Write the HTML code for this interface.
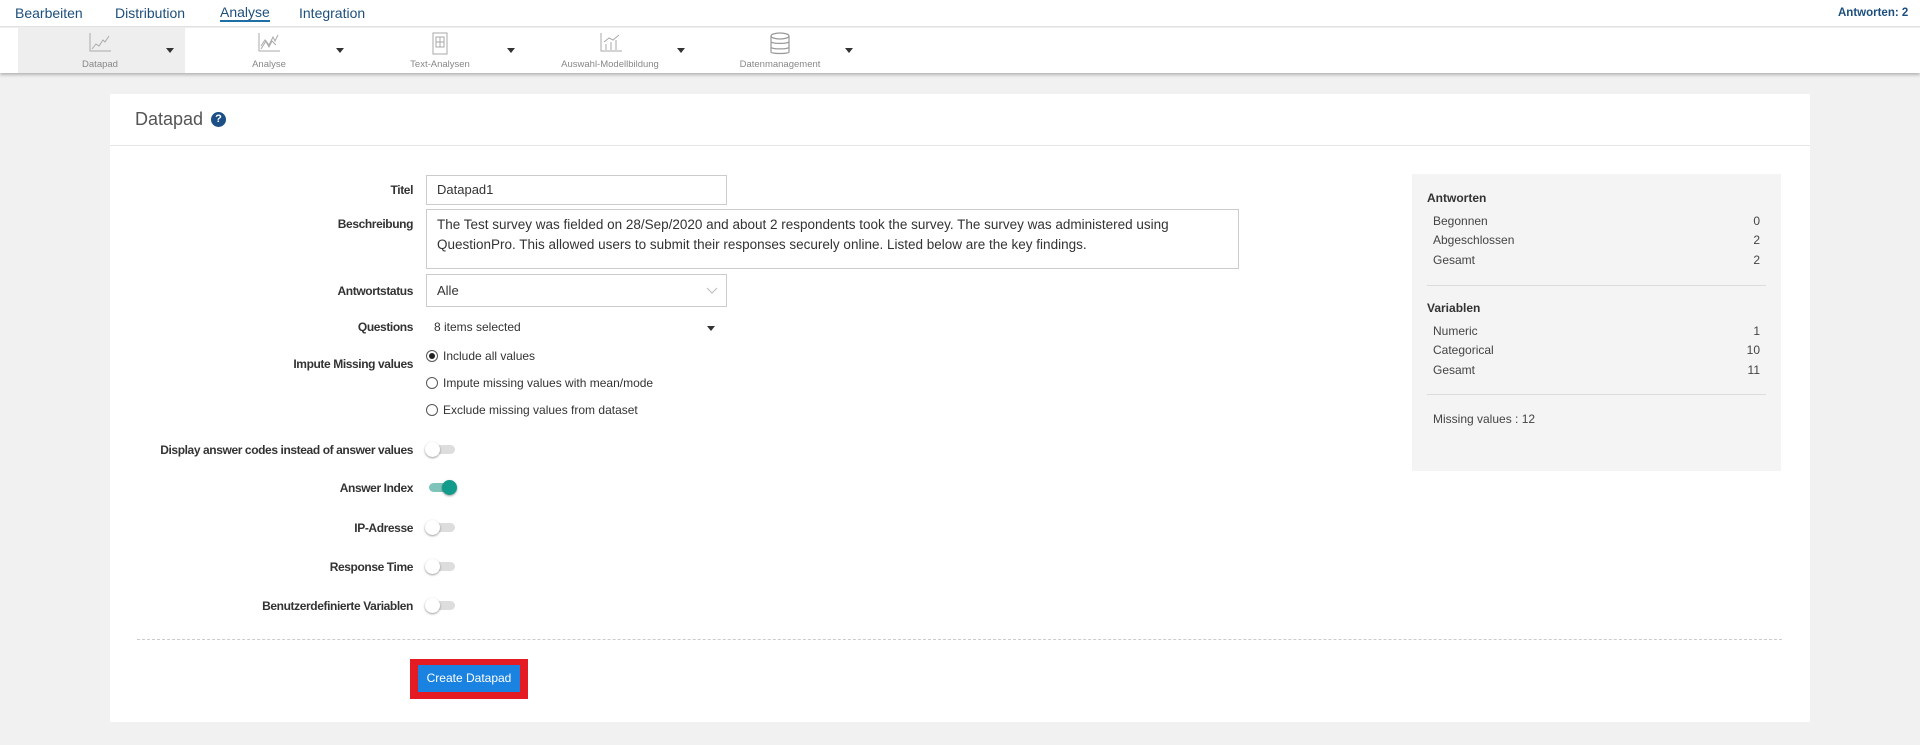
<!DOCTYPE html>
<html><head><meta charset="utf-8"><style>
*{box-sizing:border-box;margin:0;padding:0}
body{width:1920px;height:745px;background:#f1f1f1;font-family:"Liberation Sans",sans-serif;position:relative;overflow:hidden;color:#333}
.a{position:absolute}
.nav{left:0;top:0;width:1920px;height:27px;background:#fff;border-bottom:1px solid #e2e2e2}
.nav span{position:absolute;top:5px;font-size:14px;color:#1d4f7c}
.tb{left:0;top:28px;width:1920px;height:45px;background:#fff;box-shadow:0 2px 3px rgba(0,0,0,.25)}
.ti{position:absolute;top:0;height:45px}
.ti .l{position:absolute;top:31px;font-size:9.5px;color:#888;white-space:nowrap;transform:translateX(-50%)}
.ti svg{position:absolute;top:4px}
.arr{position:absolute;top:20px;width:0;height:0;border-left:4px solid transparent;border-right:4px solid transparent;border-top:5px solid #333}
.card{left:110px;top:94px;width:1700px;height:628px;background:#fff}
.lbl{position:absolute;right:1507px;font-size:12px;font-weight:bold;color:#333;white-space:nowrap;text-align:right;letter-spacing:-0.4px}
.inp{position:absolute;left:426px;border:1px solid #ccc;background:#fff;font-size:13px;color:#333;padding:6px 10px}
.rad{position:absolute;left:426px;font-size:12px;color:#333}
.rad i{display:inline-block;width:12px;height:12px;border:1px solid #555;border-radius:50%;vertical-align:-2px;margin-right:5px;position:relative}
.rad i.on:after{content:"";position:absolute;left:2px;top:2px;width:6px;height:6px;border-radius:50%;background:#222}
.tg{position:absolute;left:425px;width:32px;height:14px}
.tg b{position:absolute;left:4px;top:3px;width:26px;height:9px;border-radius:5px;background:#ddd}
.tg i{position:absolute;left:0;top:0;width:15px;height:15px;border-radius:50%;background:#fff;box-shadow:0 1px 2px rgba(0,0,0,.4)}
.tg.on b{background:#7fc4bb}.tg.on i{left:17px;background:#129a8a}
.rp{left:1412px;top:174px;width:369px;height:297px;background:#f4f4f4;font-size:12px;color:#444}
.rp .h{position:absolute;left:15px;font-weight:bold;color:#333}
.rp .r{position:absolute;left:21px;right:21px}
.rp .r span{float:right}
.rp hr{position:absolute;left:15px;right:15px;border:0;border-top:1px solid #ddd}
</style></head><body>
<div class="a nav">
<span style="left:15px">Bearbeiten</span><span style="left:115px">Distribution</span>
<span style="left:220px;border-bottom:2px solid #1d6fa5;line-height:15px">Analyse</span><span style="left:299px">Integration</span>
<span style="left:1838px;top:7px;font-size:11.5px;font-weight:bold">Antworten: 2</span>
</div>
<div class="a tb">
<div class="ti" style="left:18px;width:167px;background:#eee"></div>
<div class="ti" style="left:0;width:1px">
<svg style="left:88px" width="24" height="22" viewBox="0 0 24 22" fill="none" stroke="#aaa" stroke-width="1"><path d="M2 1V19H23"/><path d="M4 17L8 12L11 14L15 8L17 10L21 4"/></svg>
<span class="l" style="left:100px">Datapad</span><div class="arr" style="left:166px"></div>
<svg style="left:257px" width="24" height="22" viewBox="0 0 24 22" fill="none" stroke="#aaa" stroke-width="1"><path d="M2 1V19H23"/><path d="M4 17L9 9L12 13L16 5L18 9L21 3"/><path d="M4 14L8 8L12 15L15 9L19 13"/></svg>
<span class="l" style="left:269px">Analyse</span><div class="arr" style="left:336px"></div>
<svg style="left:430px" width="20" height="24" viewBox="0 0 20 24" fill="none" stroke="#aaa" stroke-width="1"><rect x="3" y="1" width="14" height="21"/><rect x="6" y="5" width="8" height="10"/><path d="M10 5V15M6 10H14"/></svg>
<span class="l" style="left:440px">Text-Analysen</span><div class="arr" style="left:507px"></div>
<svg style="left:599px" width="24" height="22" viewBox="0 0 24 22" fill="none" stroke="#aaa" stroke-width="1"><path d="M2 1V19H23"/><path d="M7 18V12M12 18V10M17 18V8M5 10L10 6L14 8L20 3"/></svg>
<span class="l" style="left:610px">Auswahl-Modellbildung</span><div class="arr" style="left:677px"></div>
<svg style="left:769px" width="22" height="24" viewBox="0 0 22 24" fill="none" stroke="#999" stroke-width="1.2"><ellipse cx="11" cy="4" rx="9" ry="3"/><path d="M2 4V20C2 22 20 22 20 20V4M2 9.5C2 12 20 12 20 9.5M2 15C2 17.5 20 17.5 20 15"/></svg>
<span class="l" style="left:780px">Datenmanagement</span><div class="arr" style="left:845px"></div>
</div>
</div>
<div class="a card">
<div class="a" style="left:25px;top:15px;font-size:18px;color:#555">Datapad</div>
<div class="a" style="left:101px;top:18px;width:15px;height:15px;border-radius:50%;background:#1b4f86;color:#fff;font-size:11px;font-weight:bold;text-align:center;line-height:15px">?</div>
<div class="a" style="left:0;top:51px;width:1700px;border-top:1px solid #e6e6e6"></div>
</div>
<div class="lbl" style="top:183px">Titel</div>
<div class="inp" style="top:175px;width:301px;height:30px">Datapad1</div>
<div class="lbl" style="top:217px">Beschreibung</div>
<div class="inp" style="top:209px;width:813px;height:60px;font-size:13.5px;line-height:20px;padding:5px 10px">The Test survey was fielded on 28/Sep/2020 and about 2 respondents took the survey. The survey was administered using QuestionPro. This allowed users to submit their responses securely online. Listed below are the key findings.</div>
<div class="lbl" style="top:284px">Antwortstatus</div>
<div class="inp" style="top:274px;width:301px;height:33px;padding-top:8px">Alle<svg class="a" style="right:8px;top:12px" width="12" height="8" viewBox="0 0 12 8"><path d="M1 1L6 6L11 1" fill="none" stroke="#bbb"/></svg></div>
<div class="lbl" style="top:320px">Questions</div>
<div class="a" style="left:434px;top:320px;font-size:12px;color:#333">8 items selected</div>
<div class="arr" style="left:707px;top:326px"></div>
<div class="lbl" style="top:357px">Impute Missing values</div>
<div class="rad" style="top:349px"><i class="on"></i>Include all values</div>
<div class="rad" style="top:376px"><i></i>Impute missing values with mean/mode</div>
<div class="rad" style="top:403px"><i></i>Exclude missing values from dataset</div>
<div class="lbl" style="top:443px">Display answer codes instead of answer values</div><div class="tg" style="top:442px"><b></b><i></i></div>
<div class="lbl" style="top:481px">Answer Index</div><div class="tg on" style="top:480px"><b></b><i></i></div>
<div class="lbl" style="top:521px">IP-Adresse</div><div class="tg" style="top:520px"><b></b><i></i></div>
<div class="lbl" style="top:560px">Response Time</div><div class="tg" style="top:559px"><b></b><i></i></div>
<div class="lbl" style="top:599px">Benutzerdefinierte Variablen</div><div class="tg" style="top:598px"><b></b><i></i></div>
<div class="a" style="left:137px;top:639px;width:1645px;border-top:1px dashed #ccc"></div>
<div class="a" style="left:410px;top:659px;width:118px;height:40px;background:#e41b23"></div>
<div class="a" style="left:418px;top:665px;width:102px;height:27px;background:#1a82e0;color:#fff;font-size:12px;text-align:center;line-height:27px">Create Datapad</div>
<div class="a rp">
<div class="h" style="top:17px">Antworten</div>
<div class="r" style="top:40px">Begonnen<span>0</span></div>
<div class="r" style="top:59px">Abgeschlossen<span>2</span></div>
<div class="r" style="top:79px">Gesamt<span>2</span></div>
<hr style="top:111px">
<div class="h" style="top:127px">Variablen</div>
<div class="r" style="top:150px">Numeric<span>1</span></div>
<div class="r" style="top:169px">Categorical<span>10</span></div>
<div class="r" style="top:189px">Gesamt<span>11</span></div>
<hr style="top:220px">
<div class="r" style="top:238px">Missing values : 12</div>
</div>
</body></html>
